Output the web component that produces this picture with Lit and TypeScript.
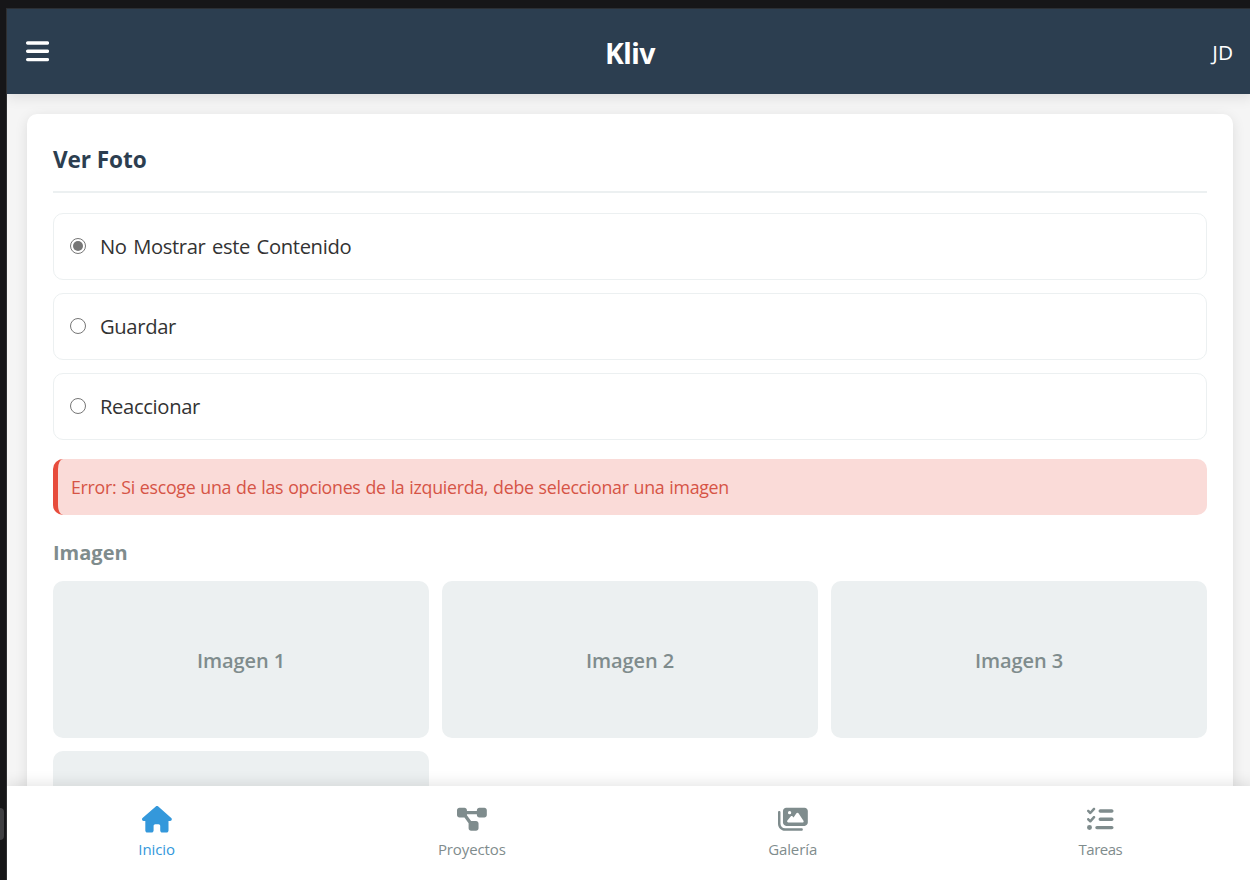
import { LitElement, html, css, svg } from "lit";
import { customElement, property, state } from "lit/decorators.js";
import { classMap } from "lit/directives/class-map.js";

const ICONS: Record<string, { w: number; d: string }> = {
  bars: {
    w: 448,
    d: "M0 96C0 78.3 14.3 64 32 64l384 0c17.7 0 32 14.3 32 32s-14.3 32-32 32L32 128C14.3 128 0 113.7 0 96zM0 256c0-17.7 14.3-32 32-32l384 0c17.7 0 32 14.3 32 32s-14.3 32-32 32L32 288c-17.7 0-32-14.3-32-32zM448 416c0 17.7-14.3 32-32 32L32 448c-17.7 0-32-14.3-32-32s14.3-32 32-32l384 0c17.7 0 32 14.3 32 32z",
  },
  home: {
    w: 576,
    d: "M575.8 255.5c0 18-15 32.1-32 32.1l-32 0 .7 160.2c0 2.7-.2 5.4-.5 8.1l0 16.2c0 22.1-17.9 40-40 40l-16 0c-1.1 0-2.2 0-3.3-.1c-1.4 .1-2.8 .1-4.2 .1L416 512l-24 0c-22.1 0-40-17.9-40-40l0-24 0-64c0-17.7-14.3-32-32-32l-64 0c-17.7 0-32 14.3-32 32l0 64 0 24c0 22.1-17.9 40-40 40l-24 0-31.9 0c-1.5 0-3-.1-4.5-.2c-1.2 .1-2.4 .2-3.6 .2l-16 0c-22.1 0-40-17.9-40-40l0-112c0-.9 0-1.9 .1-2.8l0-69.7-32 0c-18 0-32-14-32-32.1c0-9 3-17 10-24L266.4 8c7-7 15-8 22-8s15 2 21 7L564.8 231.5c8 7 12 15 11 24z",
  },
  diagram: {
    w: 576,
    d: "M0 80C0 53.5 21.5 32 48 32l96 0c26.5 0 48 21.5 48 48l0 16 192 0 0-16c0-26.5 21.5-48 48-48l96 0c26.5 0 48 21.5 48 48l0 96c0 26.5-21.5 48-48 48l-96 0c-26.5 0-48-21.5-48-48l0-16-192 0 0 16c0 1.7-.1 3.4-.3 5L272 288l96 0c26.5 0 48 21.5 48 48l0 96c0 26.5-21.5 48-48 48l-96 0c-26.5 0-48-21.5-48-48l0-96c0-1.7 .1-3.4 .3-5L144 224l-96 0c-26.5 0-48-21.5-48-48L0 80z",
  },
  images: {
    w: 576,
    d: "M160 32c-35.3 0-64 28.7-64 64l0 224c0 35.3 28.7 64 64 64l352 0c35.3 0 64-28.7 64-64l0-224c0-35.3-28.7-64-64-64L160 32zM396 138.7l96 144c4.9 7.4 5.4 16.8 1.2 24.6S480.9 320 472 320l-144 0-48 0-80 0c-9.2 0-17.6-5.3-21.6-13.6s-2.9-18.2 2.9-25.4l64-80c4.6-5.7 11.4-9 18.7-9s14.2 3.3 18.7 9l17.3 21.6 56-84C360.5 132 368 128 376 128s15.5 4 20 10.7zM192 128a32 32 0 1 1 64 0 32 32 0 1 1 -64 0zM48 120c0-13.3-10.7-24-24-24S0 106.7 0 120L0 344c0 75.1 60.9 136 136 136l320 0c13.3 0 24-10.7 24-24s-10.7-24-24-24l-320 0c-48.6 0-88-39.4-88-88l0-224z",
  },
  tasks: {
    w: 512,
    d: "M152.1 38.2c9.9 8.9 10.7 24 1.8 33.9l-72 80c-4.4 4.9-10.6 7.8-17.2 7.9s-12.9-2.4-17.6-7L7 113C-2.3 103.6-2.3 88.4 7 79s24.6-9.4 33.9 0l22.1 22.1 55.1-61.2c8.9-9.9 24-10.7 33.9-1.8zm0 160c9.9 8.9 10.7 24 1.8 33.9l-72 80c-4.4 4.9-10.6 7.8-17.2 7.9s-12.9-2.4-17.6-7L7 273c-9.4-9.4-9.4-24.6 0-33.9s24.6-9.4 33.9 0l22.1 22.1 55.1-61.2c8.9-9.9 24-10.7 33.9-1.8zM224 96c0-17.7 14.3-32 32-32l224 0c17.7 0 32 14.3 32 32s-14.3 32-32 32l-224 0c-17.7 0-32-14.3-32-32zm0 160c0-17.7 14.3-32 32-32l224 0c17.7 0 32 14.3 32 32s-14.3 32-32 32l-224 0c-17.7 0-32-14.3-32-32zM160 416c0-17.7 14.3-32 32-32l288 0c17.7 0 32 14.3 32 32s-14.3 32-32 32l-288 0c-17.7 0-32-14.3-32-32zM48 368a48 48 0 1 1 0 96 48 48 0 1 1 0-96z",
  },
};

@customElement("app-icon")
class AppIcon extends LitElement {
  @property() name = "bars";
  static styles = css`
    :host { display: block; height: 26.5px; }
    svg { display: block; height: 26.5px; fill: currentColor; }
  `;
  render() {
    const icon = ICONS[this.name];
    return html`<svg viewBox="0 0 ${icon.w} 512" width=${(icon.w / 512) * 26.5}>${svg`<path d=${icon.d}></path>`}</svg>`;
  }
}

@customElement("app-root")
class AppRoot extends LitElement {
  @state() private selected = 0;

  private options = ["No Mostrar este Contenido", "Guardar", "Reaccionar"];
  private images = ["Imagen 1", "Imagen 2", "Imagen 3", ""];
  private tabs = [
    { icon: "home", label: "Inicio", cls: "t-home" },
    { icon: "diagram", label: "Proyectos", cls: "t-projects" },
    { icon: "images", label: "Galería", cls: "t-gallery" },
    { icon: "tasks", label: "Tareas", cls: "t-tasks" },
  ];

  static styles = css`
    * { box-sizing: border-box; }
    :host {
      display: grid;
      grid-template-columns: 7px 1246px;
      grid-template-rows: 9px 871px;
      height: 880px;
      overflow: hidden;
      font-family: "Open Sans", "Noto Sans", sans-serif;
      color: #333;
      background: #161618;
      white-space: nowrap;
    }
    .top { grid-column: 1 / 3; border-bottom: 1px solid #2b2f34; margin-left: 6px; }
    .rail { border-right: 1px solid #2e2f31; padding-top: 799px; }
    .thumb { width: 4px; height: 32px; background: #3f3f41; border-radius: 0 4px 4px 0; }
    .app { display: flex; flex-direction: column; background: #f5f5f5; overflow: hidden; }
    header {
      flex: none; height: 85px; padding: 0 20px 0 19px; display: flex; align-items: center;
      justify-content: space-between; background: #2c3e50; color: #fff;
      box-shadow: 0 3px 13px rgba(0, 0, 0, 0.1); z-index: 1;
    }
    .menu, .user { width: 60px; }
    .user { text-align: right; font-size: 20.8px; }
    .brand { font-family: "Noto Sans", sans-serif; font-size: 28.4px; font-weight: 700; letter-spacing: -0.5px; padding: 2px 0 0 1px; }
    main { flex: 1; min-height: 0; padding: 20px 20px 0; overflow: hidden; }
    .card {
      height: 900px; padding: 26px; background: #fff; border-radius: 10px;
      box-shadow: 0 3px 13px rgba(0, 0, 0, 0.1);
    }
    h2 {
      margin: 0 0 20px; height: 53px; line-height: 39px; font-size: 22.6px; font-weight: 700;
      letter-spacing: -0.1px; color: #2c3e50; border-bottom: 2px solid #ecf0f1;
    }
    .options { display: grid; gap: 13px; }
    .option {
      height: 67px; padding: 0 16px 2px; border: 1px solid #ecf0f1; border-radius: 10px;
      display: flex; align-items: center; gap: 14px; font-size: 20.2px;
      letter-spacing: -0.35px; word-spacing: 1.6px;
    }
    .radio {
      width: 16px; height: 16px; border: 1.3px solid #767676; border-radius: 50%; padding: 2px;
    }
    .on::before { content: ""; display: block; width: 10px; height: 10px; border-radius: 50%; background: #767676; }
    .error {
      margin-top: 19px; height: 56px; padding-left: 13px; border-left: 5px solid #e74c3c;
      border-radius: 10px; background: #fadbd8; color: #d65446; font-size: 17.8px; line-height: 56px;
      letter-spacing: -0.29px; word-spacing: 0.6px;
    }
    h3 { margin: 22px 0 13px; height: 31px; line-height: 31px; font-size: 20px; font-weight: 700; color: #7f8c8d; }
    .grid { display: grid; grid-template-columns: repeat(3, 1fr); gap: 13px; }
    .tile {
      height: 157px; padding-top: 2px; display: grid; place-items: center; background: #ecf0f1; border-radius: 10px;
      color: #7f8c8d; font-size: 20px; font-weight: 600; letter-spacing: -0.1px;
    }
    nav {
      flex: none; height: 94px; padding-top: 20px; display: flex; justify-content: space-around;
      background: #fff; color: #7f8c8d; box-shadow: 0 -3px 13px rgba(0, 0, 0, 0.1); z-index: 1;
    }
    .tab {
      display: flex; flex-direction: column; align-items: center; font-size: 15px;
      line-height: 22px; gap: 5.5px; letter-spacing: -0.1px;
    }
    .t-home { width: 37px; color: #3498db; }
    .t-projects { width: 69px; }
    .t-gallery { width: 48px; }
    .t-tasks { width: 43px; letter-spacing: -0.5px; }
  `;

  render() {
    return html`
      <div class="top"></div>
      <div class="rail"><div class="thumb"></div></div>
      <div class="app">
        <header>
          <div class="menu"><app-icon name="bars"></app-icon></div>
          <div class="brand">Kliv</div>
          <div class="user">JD</div>
        </header>
        <main>
          <section class="card">
            <h2>Ver Foto</h2>
            <div class="options">
              ${this.options.map(
                (label, i) => html`<div class="option" @click=${() => (this.selected = i)}>
                  <span class=${classMap({ radio: true, on: i === this.selected })}></span><span>${label}</span>
                </div>`
              )}
            </div>
            <div class="error"><span>Error: Si escoge una de las opciones de la izquierda, debe seleccionar una imagen</span></div>
            <h3>Imagen</h3>
            <div class="grid">${this.images.map((t) => html`<div class="tile"><span>${t}</span></div>`)}</div>
          </section>
        </main>
        <nav>
          ${this.tabs.map(
            (t) => html`<div class="tab ${t.cls}"><app-icon name=${t.icon}></app-icon><span>${t.label}</span></div>`
          )}
        </nav>
      </div>
    `;
  }
}
